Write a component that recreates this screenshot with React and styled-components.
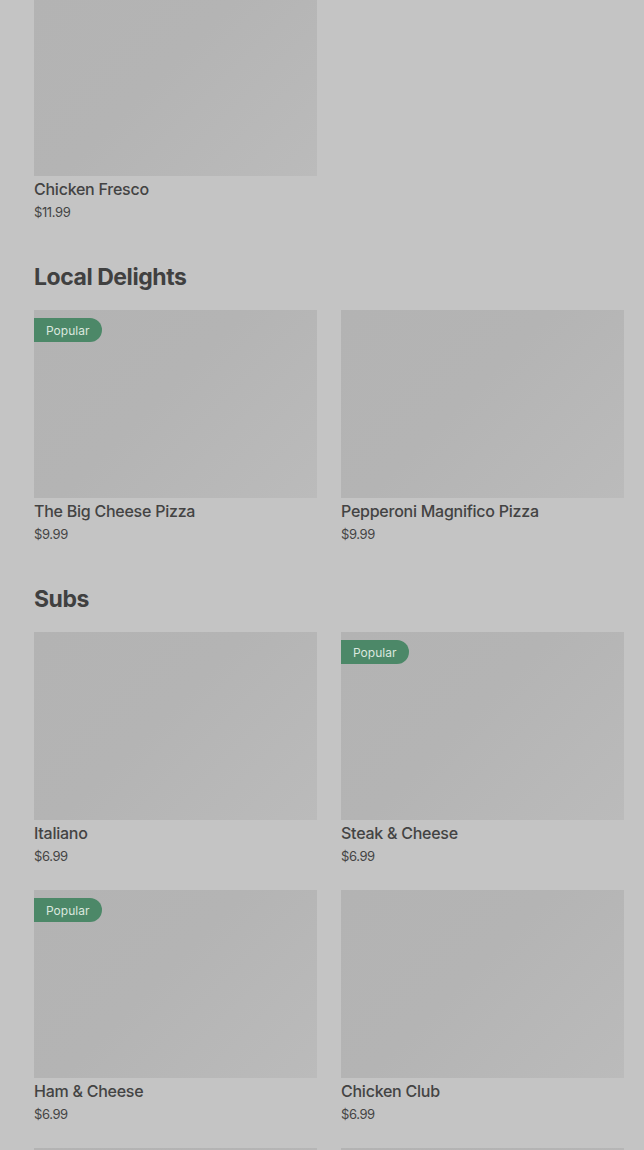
import React from "react";
import styled, { createGlobalStyle } from "styled-components";

const Global = createGlobalStyle`
  html, body { margin: 0; padding: 0; background: #c4c4c4; overflow: hidden; }
  body { font-family: Inter, "Noto Sans", "Liberation Sans", sans-serif; color: #434343; }
`;

const Page = styled.main`
  display: flex;
  flex-direction: column;
  padding: 0 20px 0 34px;
  margin-top: -12px;
`;

const Section = styled.section`
  display: flex;
  flex-direction: column;
  margin-top: ${(p) => (p.$first ? "0" : "41px")};
`;

const Heading = styled.h2`
  margin: 0 0 19px;
  font-size: 23px;
  line-height: 28px;
  font-weight: 700;
  letter-spacing: -0.45px;
  color: #404040;
`;

const Grid = styled.div`
  display: grid;
  grid-template-columns: 283px 283px;
  column-gap: 24px;
  row-gap: 24px;
`;

const Card = styled.article`
  display: flex;
  flex-direction: column;
`;

const Thumb = styled.div`
  position: relative;
  height: 188px;
  background: linear-gradient(135deg, #b3b3b3 0%, #b4b4b4 45%, #bbbbbb 100%);
`;

const Badge = styled.span`
  position: absolute;
  top: 8px;
  left: 0;
  height: 24px;
  padding: 0 13px 0 12px;
  display: flex;
  align-items: center;
  background: #4c8868;
  color: #dbe7df;
  font-size: 12px;
  font-weight: 400;
  border-radius: 0 12px 12px 0;
`;

const Name = styled.div`
  padding-top: 2px;
  font-size: 16px;
  line-height: 22px;
  font-weight: 500;
  color: #434343;
  letter-spacing: -0.25px;
`;

const Price = styled.div`
  margin-top: 2px;
  font-size: 13px;
  line-height: 20px;
  color: #444;
  letter-spacing: -0.4px;
`;

const sections = [
  { items: [{ name: "Chicken Fresco", price: "$11.99" }] },
  {
    title: "Local Delights",
    items: [
      { name: "The Big Cheese Pizza", price: "$9.99", popular: true },
      { name: "Pepperoni Magnifico Pizza", price: "$9.99" },
    ],
  },
  {
    title: "Subs",
    items: [
      { name: "Italiano", price: "$6.99" },
      { name: "Steak & Cheese", price: "$6.99", popular: true },
      { name: "Ham & Cheese", price: "$6.99", popular: true },
      { name: "Chicken Club", price: "$6.99" },
      { name: "Meatball", price: "$6.99" },
      { name: "Veggie", price: "$6.99" },
    ],
  },
];

export default function App() {
  return (
    <>
      <Global />
      <Page>
        {sections.map((s, i) => (
          <Section key={i} $first={i === 0}>
            {s.title && <Heading>{s.title}</Heading>}
            <Grid>
              {s.items.map((it) => (
                <Card key={it.name}>
                  <Thumb>{it.popular && <Badge>Popular</Badge>}</Thumb>
                  <Name>{it.name}</Name>
                  <Price>{it.price}</Price>
                </Card>
              ))}
            </Grid>
          </Section>
        ))}
      </Page>
    </>
  );
}
